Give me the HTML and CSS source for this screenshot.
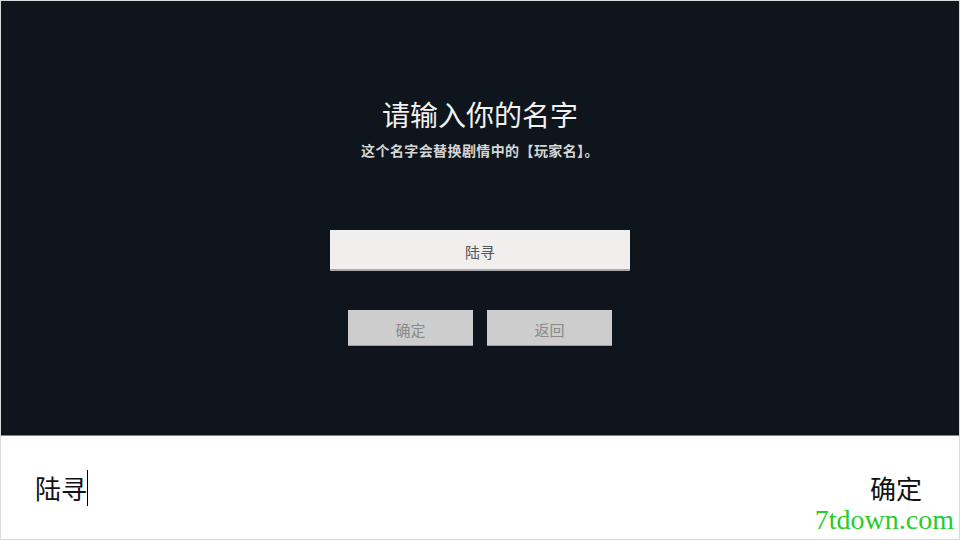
FILE: index.html
```html
<!DOCTYPE html>
<html lang="zh-CN">
<head>
    <meta charset="UTF-8">
    <meta name="viewport" content="width=device-width, initial-scale=1.0">
    <title>输入名字</title>
    <link rel="stylesheet" href="styles.css">
</head>
<body>
    <div class="screen">
        <div class="stage">
            <h1 class="title">请输入你的名字</h1>
            <p class="tip">这个名字会替换剧情中的【玩家名】。</p>
            <div class="name-box">陆寻</div>
            <div class="btns">
                <div class="btn">确定</div>
                <div class="btn">返回</div>
            </div>
        </div>
        <div class="ime">
            <div class="ime-text">陆寻<span class="caret"></span></div>
            <div class="ime-ok">确定</div>
        </div>
        <div class="mark">7tdown.com</div>
    </div>
</body>
</html>
```

FILE: styles.css
```css
body{
    margin: 0;
    font-family: "Noto Sans CJK SC", "Noto Sans", sans-serif;
}
.screen{
    position: relative;
    width: 958px;
    height: 538px;
    border: 1px solid #d9dadb;
    display: flex;
    flex-direction: column;
    overflow: hidden;
}
.stage{
    height: 434px;
    background-color: #0e151c;
    border-bottom: 1px solid #7d858c;
    display: flex;
    flex-direction: column;
    align-items: center;
}
.title{
    margin: 97px 0 0;
    font-size: 28px;
    line-height: 32px;
    font-weight: 400;
    color: #f2f2f2;
}
.tip{
    margin: 11px 0 0;
    font-size: 14px;
    line-height: 18px;
    font-weight: 700;
    letter-spacing: 0.4px;
    color: #d6d6d6;
}
.name-box{
    width: 300px;
    height: 41px;
    margin-top: 71px;
    padding-top: 3px;
    box-sizing: border-box;
    background-color: #f0efee;
    border-bottom: 2px solid #a9acae;
    display: flex;
    align-items: center;
    justify-content: center;
    font-size: 15px;
    color: #555;
}
.btns{
    display: flex;
    gap: 14px;
    margin-top: 39px;
}
.btn{
    width: 125px;
    height: 36px;
    padding-top: 3px;
    box-sizing: border-box;
    background-color: #cdcdcd;
    border-bottom: 1px solid #9a9c9e;
    display: flex;
    align-items: center;
    justify-content: center;
    font-size: 15px;
    color: #8a8a8a;
}
.ime{
    flex: 1;
    background-color: #fff;
    display: flex;
    align-items: center;
    justify-content: space-between;
    padding: 0 37px 0 34px;
    font-size: 26px;
    color: #111;
}
.ime-text{
    display: flex;
    align-items: center;
}
.caret{
    width: 1px;
    height: 36px;
    background-color: #000;
}
.mark{
    position: absolute;
    right: 3px;
    bottom: 4px;
    padding: 0 2px;
    background-color: #fff;
    font-family: "Liberation Serif", serif;
    font-size: 28px;
    line-height: 30px;
    color: #27cc27;
}
```
